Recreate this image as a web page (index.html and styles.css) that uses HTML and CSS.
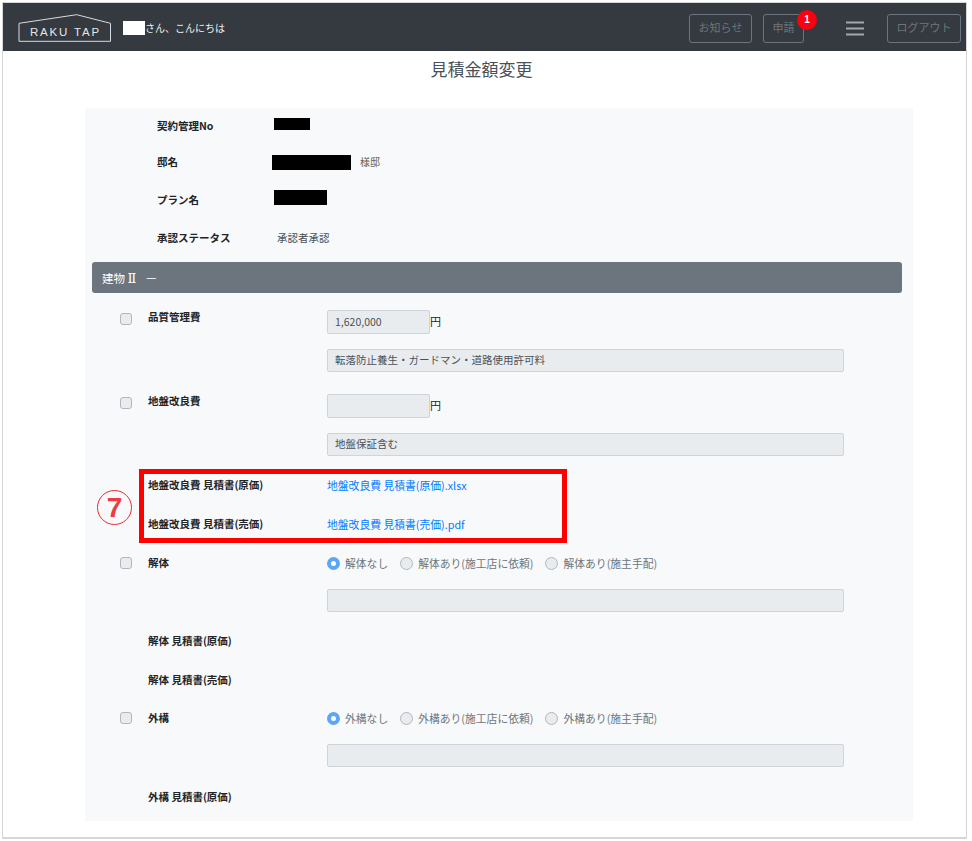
FILE: index.html
```html
<!DOCTYPE html>
<html lang="ja">
<head>
<meta charset="utf-8">
<title>見積金額変更</title>
<link rel="stylesheet" href="styles.css">
</head>
<body>
<div class="frame">
  <header class="topbar">
    <svg class="logo" width="94" height="30" viewBox="0 0 94 30">
      <path class="logo-line" d="M1 10.3 L58.7 1.7 L92.5 10.3 V28.3 H1 Z"/>
      <text class="logo-text" x="12" y="22.7">RAKU TAP</text>
    </svg>
    <span class="user-mask"></span>
    <span class="greeting">さん、こんにちは</span>
    <nav class="nav">
      <a class="nav-btn btn-news">お知らせ</a>
      <a class="nav-btn btn-apply">申請<span class="badge">1</span></a>
      <svg class="burger" width="18" height="15" viewBox="0 0 18 15">
        <path d="M0 1.5H18M0 7.5H18M0 13.5H18"/>
      </svg>
      <a class="nav-btn btn-logout">ログアウト</a>
    </nav>
  </header>

  <h1 class="title">見積金額変更</h1>

  <main class="panel">
    <div class="info-row h36"><b class="info-label">契約管理No</b><span class="mask mask-no"></span></div>
    <div class="info-row h37"><b class="info-label">邸名</b><span class="mask mask-name"></span><span class="suffix">様邸</span></div>
    <div class="info-row h38"><b class="info-label">プラン名</b><span class="mask mask-plan"></span></div>
    <div class="info-row h38"><b class="info-label">承認ステータス</b><span class="info-value">承認者承認</span></div>

    <div class="section-bar"><span>建物 <span class="roman">Ⅱ</span></span><span class="section-dash">ー</span></div>

    <div class="row row-first">
      <span class="check"></span>
      <b class="label">品質管理費</b>
      <div class="control">
        <div class="amount"><span class="field field-short">1,620,000</span><span class="unit">円</span></div>
        <span class="field field-long field-note">転落防止養生・ガードマン・道路使用許可料</span>
      </div>
    </div>

    <div class="row row-next">
      <span class="check"></span>
      <b class="label">地盤改良費</b>
      <div class="control">
        <div class="amount"><span class="field field-short"></span><span class="unit">円</span></div>
        <span class="field field-long field-note">地盤保証含む</span>
      </div>
    </div>

    <div class="file-row file-first"><b class="file-label">地盤改良費 見積書(原価)</b><a class="file-link">地盤改良費 見積書(原価).xlsx</a></div>
    <div class="file-row"><b class="file-label">地盤改良費 見積書(売価)</b><a class="file-link">地盤改良費 見積書(売価).pdf</a></div>

    <div class="row row-radio">
      <span class="check check-radio"></span>
      <b class="label">解体</b>
      <div class="control">
        <div class="radios">
          <span class="radio radio-on"></span><span class="radio-text">解体なし</span>
          <span class="radio"></span><span class="radio-text">解体あり(施工店に依頼)</span>
          <span class="radio"></span><span class="radio-text">解体あり(施主手配)</span>
        </div>
        <span class="field field-long field-note"></span>
      </div>
    </div>

    <div class="file-row file-tight"><b class="file-label">解体 見積書(原価)</b></div>
    <div class="file-row"><b class="file-label">解体 見積書(売価)</b></div>

    <div class="row row-radio2">
      <span class="check check-radio"></span>
      <b class="label">外構</b>
      <div class="control">
        <div class="radios">
          <span class="radio radio-on"></span><span class="radio-text">外構なし</span>
          <span class="radio"></span><span class="radio-text">外構あり(施工店に依頼)</span>
          <span class="radio"></span><span class="radio-text">外構あり(施主手配)</span>
        </div>
        <span class="field field-long field-note"></span>
      </div>
    </div>

    <div class="file-row file-after"><b class="file-label">外構 見積書(原価)</b></div>
  </main>

  <div class="callout-box"></div>
  <div class="callout-num">7</div>
</div>
</body>
</html>
```

FILE: styles.css
```css
* { box-sizing: border-box; }
html, body { margin: 0; padding: 0; height: 100%; overflow: hidden; background: #fff; }
body { font-family: "Noto Sans CJK JP", "Noto Sans", sans-serif; font-size: 10.5px; color: #212529; }

.frame {
  position: relative;
  width: 965px;
  height: 837px;
  margin: 2px 0 0 2px;
  border: 1px solid #d6d6d6;
  border-bottom-width: 2px;
  overflow: hidden;
  background: #fff;
}

/* header */
.topbar {
  display: flex;
  align-items: center;
  height: 48px;
  padding: 2px 0 0 15px;
  background: #343a40;
  color: #f0f0f0;
}
.logo { display: block; flex: none; }
.logo-line { fill: none; stroke: #d8dadc; stroke-width: 1; }
.logo-text { font-family: "Liberation Sans", sans-serif; font-size: 11.5px; fill: #e4e6e8; letter-spacing: 1.8px; }
.user-mask { width: 22px; height: 14px; margin-left: 11px; background: #fff; }
.greeting { font-size: 10px; line-height: 14px; }
.nav { display: flex; align-items: center; margin: 1px 0 0 auto; padding-right: 5px; }
.nav-btn {
  position: relative;
  display: block;
  height: 29px;
  line-height: 25px;
  border: 1px solid #6c757d;
  border-radius: 3px;
  color: #6c757d;
  font-size: 11px;
  text-align: center;
}
.btn-news { width: 63px; }
.btn-apply { width: 41px; margin-left: 11px; }
.btn-logout { width: 74px; }
.badge {
  position: absolute;
  left: 33px;
  top: -5px;
  width: 20px;
  height: 20px;
  border-radius: 50%;
  background: #fa0010;
  color: #fff;
  font: bold 10px/20px "Liberation Sans", sans-serif;
}
.burger { margin: 0 23px 0 42px; display: block; }
.burger path { stroke: #a4a8ac; stroke-width: 2; fill: none; }

.title {
  margin: 6px 0 0;
  height: 51px;
  padding-right: 6px;
  font-size: 17px;
  line-height: 24px;
  font-weight: 400;
  text-align: center;
  color: #495057;
}

/* panel */
.panel {
  width: 828px;
  height: 713px;
  margin-left: 82px;
  padding: 0 11px 0 7px;
  background: #f8f9fa;
}
.info-row { display: flex; align-items: center; padding: 0 0 2px 65px; }
.h36 { height: 36px; }
.h37 { height: 37px; }
.h38 { height: 38px; }
.info-label { width: 115px; flex: none; font-size: 10.5px; color: #212529; }
.info-value { margin-left: 5px; color: #495057; }
.mask { display: block; background: #000; flex: none; }
.mask-no { width: 36px; height: 12px; margin: -3px 0 0 2px; }
.mask-name { width: 79px; height: 15px; margin-top: 2px; }
.mask-plan { width: 53px; height: 15px; margin: -3px 0 0 2px; }
.suffix { margin-left: 9px; font-size: 10px; color: #6a5a50; }

.section-bar {
  display: flex;
  align-items: center;
  gap: 9px;
  height: 31px;
  margin-top: 5px;
  padding-left: 10px;
  border-radius: 3px;
  background: #6c757d;
  color: #fff;
  font-size: 11.5px;
}
.roman { font-family: "DejaVu Serif", "Liberation Serif", serif; font-size: 13px; line-height: 14px; }
.section-dash { color: #e8eaec; }

/* form rows */
.row {
  display: grid;
  grid-template-columns: 28px 179px 517px;
  align-items: start;
  margin-left: 28px;
}
.row-first { margin-top: 17px; }
.row-next { margin-top: 22px; }
.row-radio { margin-top: 13px; }
.row-radio2 { margin-top: 12px; }
.check {
  display: block;
  width: 12px;
  height: 12px;
  margin-top: 3px;
  border: 1px solid #b1b7bd;
  border-radius: 3px;
  background: #e9ecef;
}
.check-radio { margin-top: 1px; }
.label { line-height: 14px; }
.control { display: flex; flex-direction: column; gap: 15px; }
.amount { display: flex; align-items: center; }
.unit { margin-bottom: 2px; font-size: 11px; color: #212529; }
.field {
  display: block;
  height: 24px;
  line-height: 22px;
  padding: 0 7px;
  border: 1px solid #ced4da;
  border-radius: 2px;
  background: #e9ecef;
  color: #495057;
  font-size: 10.5px;
}
.field-short { width: 103px; }
.field-long { width: 517px; }
.field-note { height: 23px; line-height: 20px; }

.file-row {
  display: grid;
  grid-template-columns: 179px auto;
  align-items: center;
  height: 39px;
  margin-left: 56px;
}
.file-first { margin-top: 9px; }
.file-tight { margin-top: 9px; }
.file-after { margin-top: 10px; }
.file-link { color: #007bff; font-size: 10.8px; }

.radios { display: flex; align-items: center; height: 14px; margin-bottom: 4px; }
.radio {
  display: block;
  flex: none;
  width: 13px;
  height: 13px;
  margin-top: 1px;
  border: 1px solid #b1b7bd;
  border-radius: 50%;
  background: #e9ecef;
}
.radio-on { border: 4px solid #5ba6f7; background: #fff; }
.radio-text { margin: 0 12px 0 5px; color: #6c757d; font-size: 10.8px; white-space: nowrap; }

/* annotation overlays */
.callout-box {
  position: absolute;
  left: 136px;
  top: 466px;
  width: 428px;
  height: 74px;
  border: 5px solid #fe0000;
}
.callout-num {
  position: absolute;
  left: 94px;
  top: 487px;
  width: 35px;
  height: 35px;
  border: 1px solid #ee2a36;
  border-radius: 50%;
  color: #ee3a44;
  font: bold 28px/33px "Liberation Sans", sans-serif;
  text-align: center;
}
```
